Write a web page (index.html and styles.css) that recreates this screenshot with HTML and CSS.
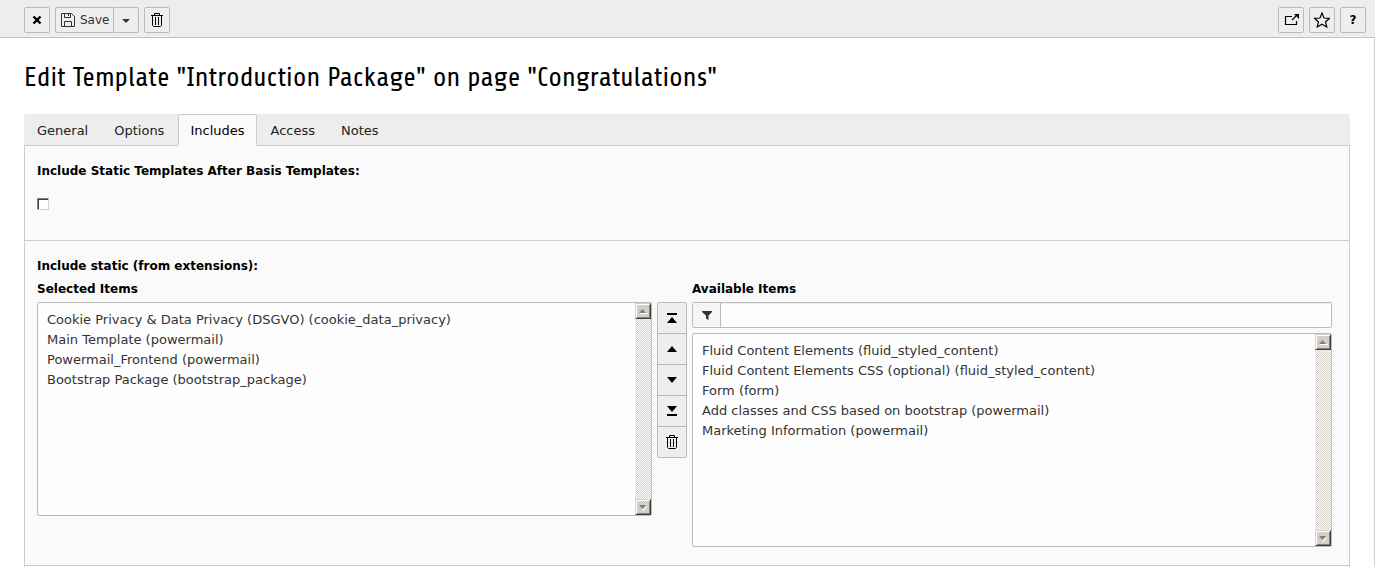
FILE: index.html
```html
<!DOCTYPE html>
<html lang="en">
<head>
<meta charset="utf-8">
<title>Edit Template</title>
<link rel="stylesheet" href="styles.css">
</head>
<body>
<svg class="sprite" aria-hidden="true">
  <symbol id="trash" viewBox="0 0 16 16"><path d="M5.500 3V1.500h5V3M2 3.500h12M3.500 4v9.500l1 1h7l1-1V4M6.500 5v8M9.500 5v8" fill="none" stroke="currentColor"/></symbol>
  <symbol id="up" viewBox="0 0 16 16"><path d="M3 11 8 5l5 6z" fill="currentColor"/></symbol>
  <symbol id="down" viewBox="0 0 16 16"><path d="M3 5h10l-5 6z" fill="currentColor"/></symbol>
  <symbol id="top" viewBox="0 0 16 16"><path d="M3 3h10v2H3zM3 13l5-6 5 6z" fill="currentColor"/></symbol>
  <symbol id="bottom" viewBox="0 0 16 16"><path d="M3 11h10v2H3zM3 3h10L8 9z" fill="currentColor"/></symbol>
  <symbol id="scroll-up" viewBox="0 0 16 16"><path d="M5 10h8v1H5z" fill="#fff"/><path d="M4 10h7L7.500 6z" fill="#808080"/></symbol>
  <symbol id="scroll-down" viewBox="0 0 16 16"><path d="M12 7v1l-4 4-1-1z" fill="#fff"/><path d="M4 6h7l-3.500 4z" fill="#808080"/></symbol>
</svg>
<header class="toolbar">
  <button class="btn" aria-label="Close"><svg class="icon" viewBox="0 0 16 16"><path d="m4.500 4.500 7 7m0-7-7 7" stroke="currentColor" stroke-width="2.400" fill="none"/></svg></button>
  <div class="split">
    <button class="btn btn-save"><svg class="icon" viewBox="0 0 16 16"><path d="M1.500 1.500h10l3 3v10h-13zM4.500 1.500v4h6v-4M4.500 14.500v-5h7v5M8.500 2v2" fill="none" stroke="currentColor"/></svg><span>Save</span></button>
    <button class="btn" aria-label="More save options"><svg class="icon" viewBox="0 0 16 16"><path d="M4 7h8l-4 4z" fill="currentColor"/></svg></button>
  </div>
  <button class="btn" aria-label="Delete"><svg class="icon"><use href="#trash"/></svg></button>
  <span class="spacer"></span>
  <button class="btn" aria-label="Open in new window"><svg class="icon" viewBox="0 0 16 16"><path d="M9 4.500H2.500v8h11V9M9 8l4-4" fill="none" stroke="currentColor" stroke-width="1.200"/><path d="M11 2h5v5z" fill="currentColor"/></svg></button>
  <button class="btn" aria-label="Bookmark"><svg class="icon" viewBox="0 0 16 16"><path d="m8 1 2 5 5.500.3-4 3.700 1.300 5L8 12.200 3.200 15l1.300-5-4-3.700L6 6z" fill="none" stroke="currentColor" stroke-width="1.200"/></svg></button>
  <button class="btn btn-help" aria-label="Help">?</button>
</header>
<main class="page">
  <h1 class="title">Edit Template "Introduction Package" on page "Congratulations"</h1>
  <nav class="tabs">
    <a class="tab" href="#general">General</a>
    <a class="tab" href="#options">Options</a>
    <a class="tab active" href="#includes">Includes</a>
    <a class="tab" href="#access">Access</a>
    <a class="tab" href="#notes">Notes</a>
  </nav>
  <div class="panel" id="includes">
    <section class="section">
      <label class="label" for="after">Include Static Templates After Basis Templates:</label>
      <input class="check" type="checkbox" id="after">
    </section>
    <section class="section">
      <div class="label">Include static (from extensions):</div>
      <div class="picker">
        <div class="column">
          <label class="label" for="selected">Selected Items</label>
          <div class="listbox">
            <select class="list" id="selected" multiple>
              <option>Cookie Privacy &amp; Data Privacy (DSGVO) (cookie_data_privacy)</option>
              <option>Main Template (powermail)</option>
              <option>Powermail_Frontend (powermail)</option>
              <option>Bootstrap Package (bootstrap_package)</option>
            </select>
            <div class="scrollbar">
              <button class="arrow" aria-label="Scroll up"><svg class="arrow-icon"><use href="#scroll-up"/></svg></button>
              <button class="arrow" aria-label="Scroll down"><svg class="arrow-icon"><use href="#scroll-down"/></svg></button>
            </div>
          </div>
        </div>
        <div class="moves">
          <button class="move" aria-label="Move to top"><svg class="icon"><use href="#top"/></svg></button>
          <button class="move" aria-label="Move up"><svg class="icon"><use href="#up"/></svg></button>
          <button class="move" aria-label="Move down"><svg class="icon"><use href="#down"/></svg></button>
          <button class="move" aria-label="Move to bottom"><svg class="icon"><use href="#bottom"/></svg></button>
          <button class="move" aria-label="Remove"><svg class="icon"><use href="#trash"/></svg></button>
        </div>
        <div class="column">
          <label class="label" for="available">Available Items</label>
          <div class="filter">
            <label class="filter-icon" for="filter" aria-label="Filter"><svg class="icon" viewBox="0 0 16 16"><path d="M3 4h10v1L9.500 8.500V13L7 11.500v-3L3 5z" fill="currentColor"/></svg></label>
            <input class="filter-input" type="text" id="filter">
          </div>
          <div class="listbox">
            <select class="list" id="available" multiple>
              <option>Fluid Content Elements (fluid_styled_content)</option>
              <option>Fluid Content Elements CSS (optional) (fluid_styled_content)</option>
              <option>Form (form)</option>
              <option>Add classes and CSS based on bootstrap (powermail)</option>
              <option>Marketing Information (powermail)</option>
            </select>
            <div class="scrollbar">
              <button class="arrow" aria-label="Scroll up"><svg class="arrow-icon"><use href="#scroll-up"/></svg></button>
              <button class="arrow" aria-label="Scroll down"><svg class="arrow-icon"><use href="#scroll-down"/></svg></button>
            </div>
          </div>
        </div>
      </div>
    </section>
  </div>
</main>
</body>
</html>
```
FILE: styles.css
```css
* { box-sizing: border-box; }
body {
  margin: 0;
  min-height: 100vh;
  display: flex;
  flex-direction: column;
  background: #fff;
  color: #333;
  font: 13px/20px Verdana, "DejaVu Sans", sans-serif;
}
button, input, select { font: inherit; color: inherit; margin: 0; }
.sprite { display: none; }
.icon { width: 16px; height: 16px; display: block; flex: none; }

.toolbar {
  display: flex;
  gap: 5px;
  height: 38px;
  padding: 7px 9px 0 24px;
  background: #ededed;
  border-bottom: 1px solid #c3c3c3;
}
.spacer { flex: 1; }
.btn {
  display: flex;
  align-items: center;
  justify-content: center;
  width: 26px;
  height: 26px;
  padding: 0;
  color: #000;
  background: #eee;
  border: 1px solid #bbb;
  border-radius: 2px;
}
.split { display: flex; }
.split .btn { color: #333; }
.split .btn + .btn { width: 25px; border-left: 0; border-radius: 0 2px 2px 0; }
.split .btn-save {
  width: auto;
  gap: 4px;
  padding: 0 4px;
  font-size: 12px;
  border-radius: 2px 0 0 2px;
}
.btn-help { font-weight: bold; font-size: 12px; }

.page {
  flex: 1;
  display: flex;
  flex-direction: column;
  padding: 24px 24px 0;
  border-right: 1px solid #d4d0c8;
}
.title {
  margin: 0 0 20px;
  color: #000;
  font: 400 27px/32px Share, "Roboto Condensed", Roboto, sans-serif;
}
.tabs {
  display: flex;
  gap: 2px;
  padding-left: 1px;
  background: #ededed;
  border-radius: 2px 2px 0 0;
  box-shadow: inset 0 -1px #ccc;
}
.tab {
  height: 32px;
  padding: 6px 11px;
  color: #212121;
  text-decoration: none;
  border: 1px solid transparent;
  line-height: 20px;
}
.tab.active {
  color: #000;
  background: #fafafa;
  border-color: #ccc;
  border-bottom-color: #fafafa;
  border-radius: 2px 2px 0 0;
}
.panel {
  flex: 1;
  background: #fafafa;
  border: solid #ccc;
  border-width: 0 1px;
}
.section { padding: 15px 17px 18px 12px; border-bottom: 1px solid #ccc; }
.section:first-child { padding-bottom: 30px; }
.label {
  display: block;
  color: #000;
  font-weight: bold;
  font-size: 12px;
  line-height: 20px;
}
.check {
  display: block;
  appearance: none;
  width: 12px;
  height: 12px;
  margin-top: 17px;
  background: #fff;
  border: 1px solid;
  border-color: #808080 #d4d0c8 #d4d0c8 #808080;
  box-shadow: inset 1px 1px #404040;
}
.picker {
  display: grid;
  grid-template-columns: 615fr 30px 640fr;
  gap: 5px;
  padding-top: 3px;
}
.column { min-width: 0; }
.column .label { margin-bottom: 3px; }
.listbox {
  display: flex;
  height: 214px;
  background: #fefefe;
  border: 1px solid #bbb;
  border-radius: 2px;
}
.list {
  flex: 1;
  min-width: 0;
  height: 212px;
  padding: 9px 9px 6px;
  background: none;
  border: 0;
  outline: 0;
  overflow: hidden;
}
.list option { padding: 0; min-height: 20px; line-height: 20px; }
.scrollbar {
  display: flex;
  flex-direction: column;
  justify-content: space-between;
  width: 16px;
  background: repeating-conic-gradient(#d4d0c8 0 25%, #fff 0 50%) 0 0 / 2px 2px;
}
.arrow {
  width: 16px;
  height: 16px;
  padding: 0;
  background: #d4d0c8;
  border: 1px solid;
  border-color: #d4d0c8 #404040 #404040 #d4d0c8;
  box-shadow: inset 1px 1px #fff, inset -1px -1px #808080;
}
.arrow-icon { display: block; width: 16px; height: 16px; margin: -1px; }
.moves { padding-top: 23px; }
.move {
  display: flex;
  align-items: center;
  justify-content: center;
  width: 30px;
  height: 32px;
  padding: 0;
  color: #000;
  background: #eee;
  border: 1px solid #bbb;
}
.move + .move { margin-top: -1px; }
.move:first-child { border-radius: 2px 2px 0 0; }
.move:last-child { border-radius: 0 0 2px 2px; }
.filter {
  display: flex;
  height: 26px;
  margin-bottom: 5px;
  border: 1px solid #bbb;
  border-radius: 2px;
  background: #fefefe;
}
.filter-icon {
  display: flex;
  align-items: center;
  justify-content: center;
  width: 28px;
  background: #f5f5f5;
  border-right: 1px solid #bbb;
}
.filter-input {
  flex: 1;
  min-width: 0;
  padding: 0 8px;
  background: none;
  border: 0;
  outline: 0;
  box-shadow: inset 0 1px 1px #eee;
}
```
